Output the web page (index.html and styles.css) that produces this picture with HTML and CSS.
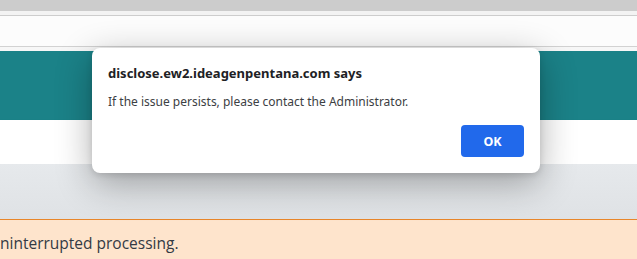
FILE: index.html
```html
<!DOCTYPE html>
<html>
<head>
<meta charset="utf-8">
<link rel="stylesheet" href="styles.css">
</head>
<body>
<div class="page">
  <div class="chrome"></div>
  <div class="strip"></div>
  <div class="toolbar"></div>
  <div class="gap"></div>
  <div class="banner"></div>
  <div class="panel"></div>
  <div class="canvas"></div>
  <div class="notice">ninterrupted processing.</div>
</div>
<div class="dialog">
  <div class="dialog-title">disclose.ew2.ideagenpentana.com says</div>
  <div class="dialog-msg">If the issue persists, please contact the Administrator.</div>
  <div class="dialog-actions"><button class="ok">OK</button></div>
</div>
</body>
</html>
```
FILE: styles.css
```css
html, body {
  margin: 0;
  padding: 0;
  width: 637px;
  height: 259px;
  overflow: hidden;
  background: #e4e7ea;
}
.page {
  display: flex;
  flex-direction: column;
}
.chrome { height: 11px; background: #cccccc; }
.strip { height: 4px; background: #f3f3f3; border-bottom: 1px solid #cdcdcd; }
.toolbar { height: 30px; background: #fcfcfc; border-bottom: 1px solid #d2d2d2; }
.gap { height: 4px; background: #f7f7f7; }
.banner { height: 69px; background: #1b8288; }
.panel { height: 44px; background: #ffffff; box-shadow: 0 2px 3px rgba(0,0,0,0.12); }
.canvas { height: 55px; background: linear-gradient(#e6e9ec, #dfe2e5); }
.notice {
  height: 40px;
  background: #fee4cc;
  border-top: 1px solid #e8862a;
  font-family: "Open Sans", sans-serif;
  font-size: 15.5px;
  color: #333a44;
  line-height: 46px;
  box-sizing: border-box;
  white-space: nowrap;
  overflow: hidden;
}
.dialog {
  position: absolute;
  left: 92px;
  top: 48px;
  width: 448px;
  height: 125px;
  box-sizing: border-box;
  background: #ffffff;
  border-radius: 8px;
  box-shadow: 0 10px 36px rgba(0,0,0,0.32), 0 2px 6px rgba(0,0,0,0.12);
  padding: 16px;
  display: flex;
  flex-direction: column;
  font-family: "Noto Sans", sans-serif;
}
.dialog-title {
  font-size: 13px;
  font-weight: 700;
  color: #202124;
  line-height: 18px;
}
.dialog-msg {
  margin-top: 11px;
  font-size: 12px;
  color: #3c4043;
  line-height: 18px;
}
.dialog-actions {
  margin-top: auto;
  display: flex;
  justify-content: flex-end;
}
.ok {
  width: 63px;
  height: 32px;
  border: none;
  border-radius: 4px;
  background: #2169eb;
  color: #ffffff;
  font-family: "Noto Sans", sans-serif;
  font-size: 12.5px;
  font-weight: 700;
  padding: 0;
}
```
